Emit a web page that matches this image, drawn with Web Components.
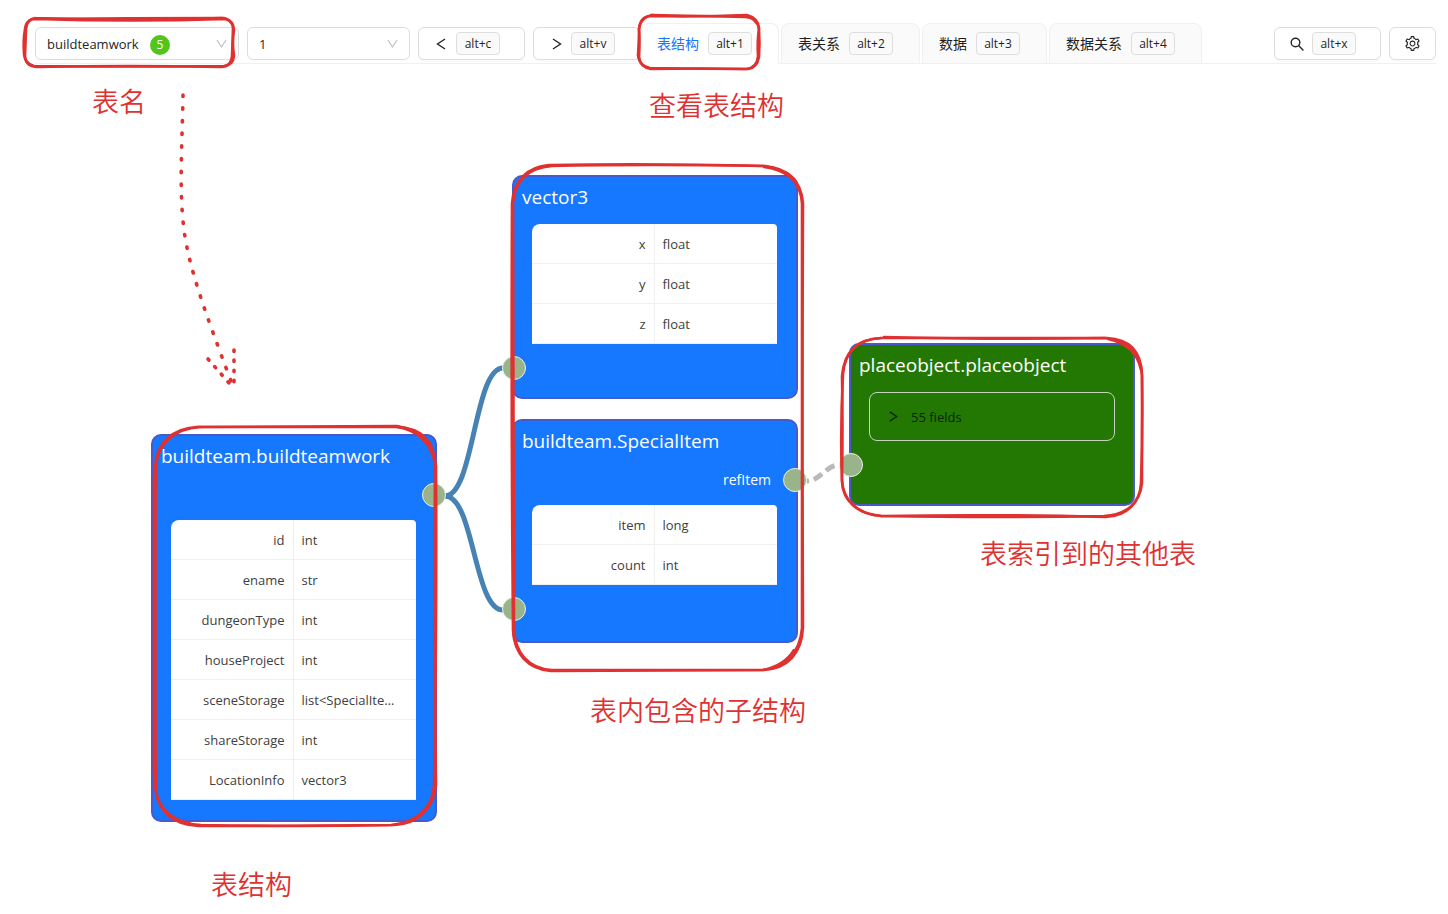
<!DOCTYPE html>
<html lang="zh-CN">
<head>
<meta charset="utf-8">
<title>表结构</title>
<style>
  html, body { margin: 0; background: #fff; }
  body { font: 13px/20px "Open Sans", "Noto Sans CJK SC", sans-serif; color: #1f1f1f; }
</style>
</head>
<body>
<schema-page></schema-page>
<script>
const define = (name, html, setup) => customElements.define(name, class extends HTMLElement {
  connectedCallback() {
    if (this.shadowRoot) return;
    const t = document.createElement('template');
    t.innerHTML = typeof html === 'function' ? html(this) : html;
    this.attachShadow({ mode: 'open' }).append(t.content.cloneNode(true));
    if (setup) setup(this);
  }
});

const icons = {
  left: '<svg viewBox="0 0 14 14" width="14" height="14"><path d="M11 2 3.500 7 11 12" fill="none" stroke="currentColor" stroke-width="1.400"/></svg>',
  right: '<svg viewBox="0 0 14 14" width="14" height="14"><path d="M4 2 11.500 7 4 12" fill="none" stroke="currentColor" stroke-width="1.400"/></svg>',
  search: '<svg viewBox="0 0 14 14" width="14" height="14"><g fill="none" stroke="currentColor" stroke-width="1.400"><circle cx="5.500" cy="5.500" r="4.300"/><path d="m8.600 8.600 4.800 4.800"/></g></svg>',
  gear: '<svg viewBox="64 64 896 896" width="15" height="15" fill="currentColor"><path d="M924.8 625.7l-65.5-56c3.1-19 4.7-38.4 4.7-57.8s-1.6-38.8-4.7-57.8l65.5-56a32.03 32.03 0 009.3-35.2l-.9-2.6a443.74 443.74 0 00-79.7-137.9l-1.8-2.1a32.12 32.12 0 00-35.1-9.5l-81.3 28.9c-30-24.6-63.5-44-99.7-57.6l-15.7-85a32.05 32.05 0 00-25.8-25.7l-2.7-.5c-52.1-9.4-106.9-9.4-159 0l-2.7.5a32.05 32.05 0 00-25.8 25.7l-15.8 85.4a351.86 351.86 0 00-99 57.4l-81.9-29.1a32 32 0 00-35.1 9.5l-1.8 2.1a446.02 446.02 0 00-79.7 137.9l-.9 2.6c-4.5 12.5-.8 26.5 9.3 35.2l66.3 56.6c-3.1 18.8-4.6 38-4.6 57.1 0 19.2 1.5 38.4 4.6 57.1L99 625.5a32.03 32.03 0 00-9.3 35.2l.9 2.6c18.1 50.4 44.9 96.9 79.7 137.9l1.8 2.1a32.12 32.12 0 0035.1 9.5l81.9-29.1c29.8 24.5 63.1 43.9 99 57.4l15.8 85.4a32.05 32.05 0 0025.8 25.7l2.7.5a449.4 449.4 0 00159 0l2.7-.5a32.05 32.05 0 0025.8-25.7l15.7-85a350 350 0 0099.7-57.6l81.3 28.9a32 32 0 0035.1-9.5l1.8-2.1c34.8-41.1 61.6-87.5 79.7-137.9l.9-2.6c4.5-12.3.8-26.3-9.3-35zM788.3 465.9c2.5 15.1 3.8 30.6 3.8 46.1s-1.3 31-3.8 46.1l-6.6 40.1 74.7 63.9a370.03 370.03 0 01-42.6 73.6L721 702.8l-31.4 25.8c-23.9 19.6-50.5 35-79.3 45.8l-38.1 14.3-17.9 97a377.5 377.5 0 01-85 0l-17.9-97.2-37.8-14.5c-28.5-10.8-55-26.2-78.7-45.7l-31.4-25.9-93.4 33.2c-17-22.9-31.2-47.6-42.6-73.6l75.5-64.5-6.5-40c-2.4-14.9-3.7-30.3-3.7-45.5 0-15.3 1.2-30.6 3.7-45.5l6.5-40-75.5-64.5c11.3-26.1 25.6-50.7 42.6-73.6l93.4 33.2 31.4-25.9c23.7-19.5 50.2-34.9 78.7-45.7l37.9-14.3 17.9-97.2c28.1-3.2 56.8-3.2 85 0l17.9 97 38.1 14.3c28.7 10.8 55.4 26.2 79.3 45.8l31.4 25.8 92.8-32.9c17 22.9 31.2 47.6 42.6 73.6L781.8 426l6.5 39.9zM512 336c-97.200 0-176 78.800-176 176s78.800 176 176 176 176-78.800 176-176-78.800-176-176-176zm79.200 255.200A111.600 111.600 0 01512 624c-29.900 0-58-11.700-79.200-32.800A111.600 111.600 0 01400 512c0-29.900 11.700-58 32.800-79.200C454 411.600 482.100 400 512 400c29.900 0 58 11.600 79.200 32.800A111.600 111.600 0 01624 512c0 29.900-11.700 58-32.800 79.200z"/></svg>'
};

define('key-hint', `<style>
  :host { display: inline-flex; }
  kbd { box-sizing: border-box; min-width: 44px; height: 23px; padding: 0 7px; border: 1px solid #dedede; border-radius: 4px;
    background: #fafafa; font: 12px/21px "Open Sans", sans-serif; text-align: center; }
</style><kbd><slot></slot></kbd>`);

define('tool-button', el => `<style>
  :host { display: block; flex: none; }
  button { box-sizing: border-box; display: flex; align-items: center; gap: 8px; height: 33px; padding: 0 15px; border: 1px solid #dcdcdc;
    border-radius: 6px; background: #fff; color: #262626; font: inherit; box-shadow: 0 2px 0 rgba(0,0,0,.02); }
  key-hint { margin-right: 9px; }
  svg { display: block; }
</style><button type="button" aria-label="${el.getAttribute('label')}">${icons[el.getAttribute('icon')]}${el.hasAttribute('keys') ? `<key-hint>${el.getAttribute('keys')}</key-hint>` : ''}</button>`);

define('pick-list', el => `<style>
  :host { display: block; position: relative; flex: none; }
  select { box-sizing: border-box; display: block; width: 100%; height: 33px; padding: 0 32px 0 11px; border: 1px solid #dcdcdc; border-radius: 6px;
    background: #fff; color: #262626; font: inherit; appearance: none; }
  svg { position: absolute; right: 12px; top: 12px; pointer-events: none; }
  b { position: absolute; left: 115px; top: 8px; width: 20px; height: 20px; border-radius: 10px; background: #52c41a; color: #fff;
    font-weight: 400; font-size: 12px; line-height: 20px; text-align: center; pointer-events: none; }
</style><select aria-label="${el.getAttribute('label')}"><option>${el.getAttribute('value')}</option></select>
${el.hasAttribute('badge') ? `<b>${el.getAttribute('badge')}</b>` : ''}
<svg width="11" height="10" viewBox="0 0 11 10"><path d="M1 1 5.500 8 10 1" fill="none" stroke="#bfbfbf" stroke-width="1.200"/></svg>`);

define('tab-item', el => `<style>
  :host { display: block; flex: none; }
  button { box-sizing: border-box; display: flex; align-items: center; gap: 9px; height: 41px; padding: 0 26px 0 16px; border: 1px solid #f0f0f0;
    border-radius: 8px 8px 0 0; background: #fafafa; color: #1f1f1f; font: inherit; font-size: 14px; }
  button[aria-selected=true] { background: #fff; border-bottom-color: #fff; color: #1677ff; }
  key-hint { color: #1f1f1f; }
</style><button type="button" role="tab" aria-selected="${el.hasAttribute('active')}"><slot></slot><key-hint>${el.getAttribute('keys')}</key-hint></button>`);

define('top-bar', `<style>
  :host { display: flex; align-items: flex-end; gap: 8px; margin: 0 12px 0 35px; padding-top: 23px; box-shadow: inset 0 -1px #f0f0f0; }
  .raised { display: flex; gap: 8px; margin-bottom: 4px; }
  .table { width: 204px; }
  .record { width: 163px; }
  nav { display: flex; flex: 1; gap: 2px; margin-left: -8px; position: relative; }
</style>
<div class="raised">
  <pick-list class="table" label="表" value="buildteamwork" badge="5"></pick-list>
  <pick-list class="record" label="记录" value="1"></pick-list>
  <tool-button icon="left" label="后退" keys="alt+c"></tool-button>
  <tool-button icon="right" label="前进" keys="alt+v"></tool-button>
</div>
<nav role="tablist">
  <tab-item active keys="alt+1">表结构</tab-item>
  <tab-item keys="alt+2">表关系</tab-item>
  <tab-item keys="alt+3">数据</tab-item>
  <tab-item keys="alt+4">数据关系</tab-item>
</nav>
<div class="raised">
  <tool-button icon="search" label="搜索" keys="alt+x"></tool-button>
  <tool-button icon="gear" label="设置"></tool-button>
</div>`);

/* A port is a round connection handle on the left or right edge of a node. */
define('node-port', el => `<style>
  :host { display: flex; position: relative; align-items: center; justify-content: flex-end; height: 37px; padding-right: 25px; color: #fff; font-size: 14px; font-weight: 500; }
  i { position: absolute; box-sizing: border-box; width: 24px; height: 24px; border: 1px solid #e8efe5; border-radius: 12px; background: #99b48b; }
  .right { top: 7px; right: -11px; }
  .left { top: 5px; left: -12px; }
</style><slot></slot><i class="${el.getAttribute('side')}"></i>`);

define('field-table', el => `<style>
  :host { display: block; margin: 7px 19px 7px 18px; }
  table { width: 100%; table-layout: fixed; border-collapse: separate; border-spacing: 0; background: #fff; border-radius: 8px 4px 0 0; color: #404040; }
  th, td { box-sizing: border-box; height: 40px; padding: 0 8px; font-weight: 400; border-bottom: 1px solid #f0f0f0; overflow: hidden; text-overflow: ellipsis; white-space: nowrap; }
  th { text-align: right; border-right: 1px solid #f0f0f0; }
  td { text-align: left; padding-right: 14px; }
</style><table><tbody>${el.getAttribute('fields').split(' ').map(f => {
  const [n, t] = f.split(':');
  return `<tr><th scope="row">${n}</th><td>${t.replace('<', '&lt;')}</td></tr>`;
}).join('')}</tbody></table>`);

define('field-fold', `<style>
  :host { display: block; margin: 7px 18px; }
  button { box-sizing: border-box; display: flex; align-items: center; gap: 12px; width: 100%; height: 49px; padding: 0 16px; border: 1px solid #c3d3be; border-radius: 8px;
    background: transparent; color: #0b2404; font: inherit; }
  svg { width: 13px; height: 13px; }
</style><button type="button" aria-expanded="false">${icons.right}<slot></slot></button>`);

define('graph-node', el => `<style>
  :host { display: block; position: absolute; box-sizing: border-box; width: 286px; border: 2px solid #4759cb; border-radius: 10px; background: #1677ff; }
  :host([foreign]) { background: #237804; }
  h2 { margin: 0; padding: 0 8px; font-size: 19px; font-weight: 400; line-height: 40px; color: #fff; }
</style><h2>${el.getAttribute('name')}</h2><slot></slot>`);

define('schema-graph', `<style>
  :host { display: block; position: relative; min-height: 850px; }
  svg { position: absolute; left: 0; top: 0; width: 100%; height: 100%; overflow: visible; }
  .root { left: 151px; top: 370px; height: 388px; }
  .vector { left: 512px; top: 111px; height: 224px; }
  .item { left: 512px; top: 355px; height: 224px; }
  .place { left: 849px; top: 279px; height: 163px; }
</style>
<svg fill="none" stroke-width="5" aria-hidden="true">
  <g stroke="#4682b4"><path d="M445 432C474 432 474 304 503 304"/><path d="M445 432C474 432 474 546 503 546"/></g>
  <path d="M807 417C820 417 826 401 839 401" stroke="#b9b9b9" stroke-dasharray="10 5" stroke-dashoffset="8"/>
</svg>
<graph-node class="root" name="buildteam.buildteamwork">
  <node-port side="right"></node-port>
  <field-table fields="id:int ename:str dungeonType:int houseProject:int sceneStorage:list<SpecialItem> shareStorage:int LocationInfo:vector3"></field-table>
</graph-node>
<graph-node class="vector" name="vector3">
  <field-table fields="x:float y:float z:float"></field-table>
  <node-port side="left"></node-port>
</graph-node>
<graph-node class="item" name="buildteam.SpecialItem">
  <node-port side="right">refItem</node-port>
  <field-table fields="item:long count:int"></field-table>
  <node-port side="left"></node-port>
</graph-node>
<graph-node class="place" foreign name="placeobject.placeobject">
  <field-fold>55 fields</field-fold>
  <node-port side="left"></node-port>
</graph-node>`);

/* Hand-drawn outlines: each is two passes of the pen that drift apart a little. */
define('pen-layer', `<style>
  :host { display: block; position: absolute; inset: 0; pointer-events: none; color: #e03131; }
  svg { position: absolute; width: 100%; height: 100%; overflow: visible; }
  p { position: absolute; margin: 0; font-size: 27px; line-height: 40px; white-space: nowrap; font-family: "Noto Sans CJK SC", sans-serif; font-weight: 350; }
  .name { left: 92px; top: 81px; }
  .view { left: 649px; top: 85px; }
  .other { left: 980px; top: 533px; }
  .sub { left: 590px; top: 690px; }
  .structure { left: 211px; top: 864px; }
</style>
<svg fill="none" stroke="currentColor" stroke-width="2.600" stroke-linecap="round" aria-hidden="true">
  <path d="M35 18Q130 21 222 18Q232 19 233 28L232 56Q231 67 221 67Q130 65 36 67Q26 66 25 57L26 29Q27 19 35 18"/>
  <path d="M33 19Q130 18 224 18Q234 21 234 30Q232 42 234 56Q233 65 224 66Q130 67 34 66Q25 64 24 54Q23 40 25 29Q26 19 36 19Q130 22 226 19M225 66Q231 65 233 57"/>
  <path d="M650 16Q700 17 747 15Q758 18 759 28Q757 43 758 56Q757 68 746 69Q700 68 651 69Q640 67 639 57Q640 40 639 29Q640 17 650 16"/>
  <path d="M651 15Q700 16 746 17Q757 18 759 29Q760 43 759 57Q757 68 748 69Q700 69 650 68Q639 66 638 55Q639 40 639 30Q640 17 653 15"/>
  <path d="M198 427L398 427C420 428 435 440 435 465Q434 620 436 785C434 808 418 824 394 825Q300 826 199 826C172 825 156 810 155 785Q156 620 155 466C157 443 172 428 198 427"/>
  <path d="M196 427L397 426C422 430 434 443 436 466Q437 620 434 786C432 808 416 823 391 825Q300 827 201 825C174 823 156 809 156 786Q154 620 156 465C159 442 175 429 200 427M397 427Q427 432 434 460M154 475V774"/>
  <path d="M549 165Q650 163 764 166C788 168 801 180 803 203Q802 410 803 627C802 653 788 669 763 670L551 671C528 669 514 654 513 630Q511 420 512 203C514 180 527 167 549 165"/>
  <path d="M550 166Q650 164 765 166C787 170 801 182 802 204L802 628C800 652 786 668 762 670L552 670C529 669 515 653 514 629Q514 420 513 203C515 181 528 168 552 166M764 167Q795 171 801 196M794 650Q785 665 764 670"/>
  <path d="M882 338Q1000 338 1107 338C1129 339 1141 351 1142 374Q1143 430 1141 483C1140 503 1127 516 1106 517Q1000 514 882 516C857 514 843 501 842 482Q840 430 843 374C845 351 858 339 882 338"/>
  <path d="M884 337Q1000 340 1105 338C1128 341 1141 352 1142 376Q1142 430 1142 483C1140 503 1126 515 1104 516Q1000 518 881 516C857 514 843 500 842 480Q843 430 842 376C844 352 857 339 881 338M1108 339Q1136 345 1141 370"/>
  <path stroke-width="3.600" stroke-dasharray="1.400 11.300" d="M183 95C182 150 179 190 184 230C189 268 205 312 231 381"/>
  <path stroke-width="3.600" stroke-dasharray="1.400 8.700" d="M208 359 229 383M234 350V382"/>
</svg>
<p class="name">表名</p>
<p class="view">查看表结构</p>
<p class="other">表索引到的其他表</p>
<p class="sub">表内包含的子结构</p>
<p class="structure">表结构</p>`);

define('schema-page', `<style>:host { display: block; position: relative; overflow: hidden; }</style>
<top-bar></top-bar><schema-graph></schema-graph><pen-layer></pen-layer>`);
</script>
</body>
</html>
